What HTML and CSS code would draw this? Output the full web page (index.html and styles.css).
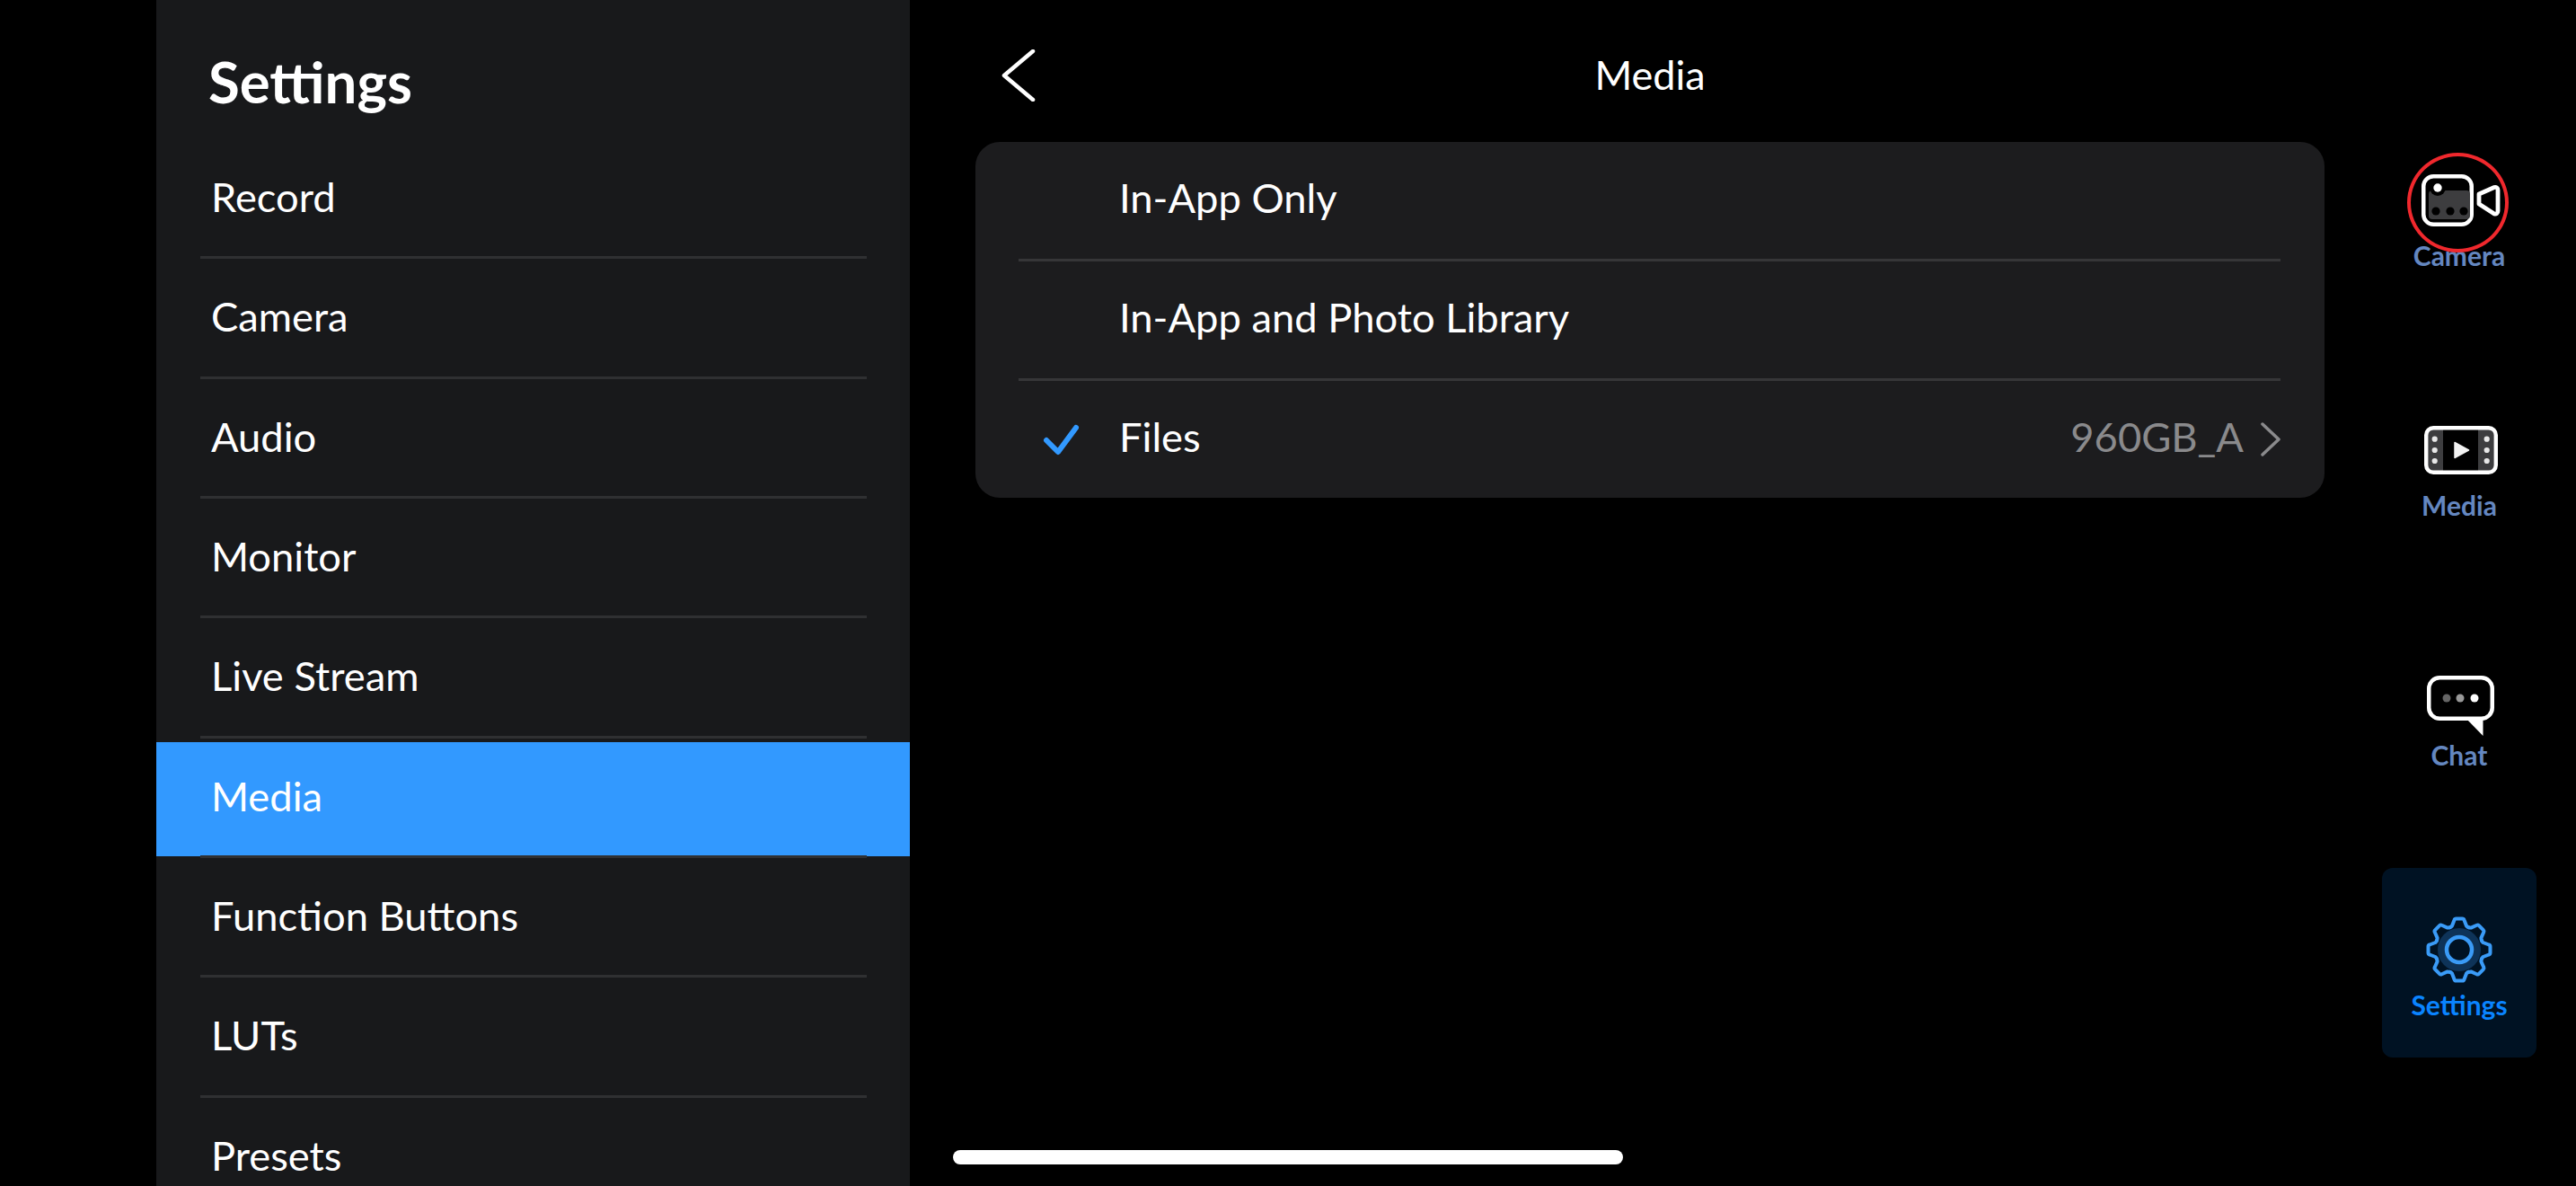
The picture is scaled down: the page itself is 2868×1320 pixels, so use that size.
FILE: index.html
```html
<!DOCTYPE html>
<html lang="en">
<head>
    <meta charset="UTF-8">
    <title>Media Settings</title>
    <link rel="stylesheet" href="styles.css">
</head>
<body>
    <div class="screen">
        <aside class="sidebar">
            <h1>Settings</h1>
            <ul class="menu">
                <li>Record</li>
                <li>Camera</li>
                <li>Audio</li>
                <li>Monitor</li>
                <li>Live Stream</li>
                <li class="active"><span>Media</span></li>
                <li>Function Buttons</li>
                <li>LUTs</li>
                <li>Presets</li>
            </ul>
        </aside>

        <main class="content">
            <header class="top-bar">
                <svg class="back" viewBox="0 0 38 58" width="38" height="58"><path d="M35 2 3 29l32 27" fill="none" stroke="#fff" stroke-width="4.5" stroke-linecap="round" stroke-linejoin="round"/></svg>
                <h2>Media</h2>
            </header>
            <div class="panel">
                <div class="option"><span class="check"></span><span class="option-name">In-App Only</span></div>
                <div class="option"><span class="check"></span><span class="option-name">In-App and Photo Library</span></div>
                <div class="option">
                    <span class="check">
                        <svg viewBox="0 0 42 36" width="42" height="36"><path d="M4 19l13 13L37 5" fill="none" stroke="#3299ff" stroke-width="6" stroke-linecap="round" stroke-linejoin="round"/></svg>
                    </span>
                    <span class="option-name">Files</span>
                    <span class="option-value">960GB_A</span>
                    <svg class="chevron" viewBox="0 0 22 38" width="22" height="38"><path d="M2 2l18 17L2 36" fill="none" stroke="#8a8a8c" stroke-width="3.5" stroke-linecap="round" stroke-linejoin="round"/></svg>
                </div>
            </div>
        </main>

        <nav class="rail">
            <div class="tab">
                <div class="tab-icon">
                    <svg viewBox="0 0 88 58" width="88" height="58">
                        <rect x="2.25" y="2.25" width="53.5" height="53.5" rx="11" fill="none" stroke="#fff" stroke-width="4.5"/>
                        <rect x="8" y="18" width="46" height="32" rx="4" fill="#3d3d3f"/>
                        <circle cx="18" cy="15" r="9" fill="#000"/>
                        <circle cx="18" cy="15" r="4.7" fill="#fff"/>
                        <circle cx="16" cy="41" r="4.6" fill="#000"/>
                        <circle cx="32" cy="41" r="4.6" fill="#000"/>
                        <circle cx="47" cy="41" r="4.6" fill="#000"/>
                        <path d="M64 22l17-7.5a3 3 0 0 1 4 3V41a3 3 0 0 1-4 3L64 33z" fill="none" stroke="#fff" stroke-width="4.8" stroke-linejoin="round"/>
                    </svg>
                </div>
                <span class="tab-label">Camera</span>
                <span class="record-ring"></span>
            </div>
            <div class="tab">
                <div class="tab-icon">
                    <svg viewBox="0 0 82 54" width="82" height="54">
                        <rect x="4" y="4" width="74" height="46" fill="#3d3d3f"/>
                        <rect x="21" y="4" width="39" height="46" fill="#000"/>
                        <rect x="2.2" y="2.2" width="77.6" height="49.6" rx="8" fill="none" stroke="#fff" stroke-width="4.4"/>
                        <circle cx="11.7" cy="14.7" r="3.1" fill="#e8e8e8"/>
                        <circle cx="11.7" cy="27" r="3.1" fill="#e8e8e8"/>
                        <circle cx="11.7" cy="39" r="3.1" fill="#e8e8e8"/>
                        <circle cx="69.7" cy="14.7" r="3.1" fill="#e8e8e8"/>
                        <circle cx="69.7" cy="27" r="3.1" fill="#e8e8e8"/>
                        <circle cx="69.7" cy="39" r="3.1" fill="#e8e8e8"/>
                        <path d="M34 18.5L49.5 27 34 35.5z" fill="#f2f2f2" stroke="#f2f2f2" stroke-width="1.5" stroke-linejoin="round"/>
                    </svg>
                </div>
                <span class="tab-label">Media</span>
            </div>
            <div class="tab">
                <div class="tab-icon">
                    <svg viewBox="0 -13 75 80" width="75" height="80">
                        <rect x="2.25" y="2.25" width="70.5" height="45.5" rx="12" fill="none" stroke="#fff" stroke-width="4.5"/>
                        <path d="M43 47h19.5v20z" fill="#fff"/>
                        <circle cx="22" cy="25" r="4.5" fill="#666"/>
                        <circle cx="37" cy="25" r="4.5" fill="#999"/>
                        <circle cx="53" cy="25" r="4.5" fill="#fff"/>
                    </svg>
                </div>
                <span class="tab-label">Chat</span>
            </div>
            <div class="tab selected">
                <div class="tab-icon">
                    <svg viewBox="-38 -38 76 76" width="76" height="76">
                        <defs>
                            <path id="gear-tooth" d="M-10.33-24.94Q-9-25.5-8-26.5L-5.5-33Q-5-34.5-3.5-34.5H3.5Q5-34.5 5.5-33L8-26.5Q9-25.5 10.33-24.94" fill="none" stroke="#3a9bf7" stroke-width="4" stroke-linecap="round" stroke-linejoin="round"/>
                        </defs>
                        <circle r="24" fill="#0e3358"/>
                        <circle r="14" fill="#001223" stroke="#3a9bf7" stroke-width="4.5"/>
                        <use href="#gear-tooth"/>
                        <use href="#gear-tooth" transform="rotate(45)"/>
                        <use href="#gear-tooth" transform="rotate(90)"/>
                        <use href="#gear-tooth" transform="rotate(135)"/>
                        <use href="#gear-tooth" transform="rotate(180)"/>
                        <use href="#gear-tooth" transform="rotate(225)"/>
                        <use href="#gear-tooth" transform="rotate(270)"/>
                        <use href="#gear-tooth" transform="rotate(315)"/>
                    </svg>
                </div>
                <span class="tab-label">Settings</span>
            </div>
        </nav>

        <div class="home-bar"></div>
    </div>
</body>
</html>
```

FILE: styles.css
```css
* {
    margin: 0;
    padding: 0;
    box-sizing: border-box;
}

html,
body {
    height: 100%;
    background-color: #000;
}

body {
    font-family: Lato, "Open Sans", sans-serif;
    color: #fff;
    overflow: hidden;
}

.screen {
    position: relative;
    display: flex;
    height: 1320px;
    padding-left: 174px;
    overflow: hidden;
}

/* Left settings list */
.sidebar {
    width: 839px;
    height: 1320px;
    flex-shrink: 0;
    background-color: #18191b;
    padding-top: 58px;
}

.sidebar h1 {
    font-size: 63.5px;
    font-weight: 700;
    line-height: 66px;
    height: 97px;
    padding-left: 58px;
}

.menu {
    list-style: none;
}

.menu li {
    height: 133.33px;
    margin: 0 48px 0 49px;
    padding: 0 0 3px 12px;
    display: flex;
    align-items: center;
    font-size: 45.3px;
    border-bottom: 3px solid #2f3032;
}

.menu li.active {
    margin: 0;
    padding: 3px 0 0;
    border-bottom: 0;
    position: relative;
}

.menu li.active span {
    display: flex;
    align-items: center;
    width: 100%;
    height: 127px;
    padding: 0 0 8px 61px;
    background-color: #3299ff;
}

.menu li.active::after {
    content: "";
    position: absolute;
    left: 49px;
    right: 48px;
    bottom: 0;
    height: 3px;
    background-color: #2f3032;
}

/* Middle column */
.content {
    width: 1575px;
    flex-shrink: 0;
    padding-left: 73px;
}

.top-bar {
    position: relative;
    height: 158px;
    padding-top: 55px;
}

.top-bar h2 {
    position: absolute;
    left: 0;
    right: 0;
    top: 55px;
    text-align: center;
    font-size: 45px;
    font-weight: 400;
    line-height: 56px;
}

.back {
    display: block;
    margin-left: 29px;
}

.panel {
    width: 1502px;
    height: 396px;
    background-color: #1c1c1e;
    border-radius: 27px;
    padding: 0 49px 0 48px;
}

.option {
    height: 133px;
    display: flex;
    align-items: center;
    padding-bottom: 7px;
    font-size: 45.3px;
    border-bottom: 3px solid #363638;
}

.option:last-child {
    height: 130px;
    border-bottom: 0;
}

.check {
    width: 112px;
    display: flex;
    padding: 7px 0 0 27px;
}

.option-name {
    flex-grow: 1;
}

.option-value {
    color: #8a8a8c;
    margin-right: 19px;
}

.chevron {
    margin-top: 7px;
}

/* Right rail */
.rail {
    width: 172px;
    margin-left: 64px;
    padding-top: 132px;
    display: flex;
    flex-direction: column;
    gap: 67px;
}

.tab {
    position: relative;
    height: 211px;
    flex-shrink: 0;
    display: flex;
    flex-direction: column;
    align-items: center;
    border-radius: 12px;
    padding-top: 48px;
}

.tab-icon {
    height: 86px;
    display: flex;
    align-items: center;
    padding-left: 3px;
}

.tab-label {
    font-size: 30px;
    font-weight: 700;
    line-height: 36px;
    color: #6487c0;
}

.tab.selected {
    background-color: #001223;
}

.tab.selected .tab-icon {
    padding-left: 0;
}

.tab.selected .tab-label {
    color: #0a84ff;
}

.record-ring {
    position: absolute;
    left: 28px;
    top: 38px;
    width: 113px;
    height: 111px;
    border: 4px solid #f0282d;
    border-radius: 50%;
}

.home-bar {
    position: absolute;
    left: 1061px;
    bottom: 24px;
    width: 746px;
    height: 16px;
    border-radius: 8px;
    background-color: #fff;
}
```
